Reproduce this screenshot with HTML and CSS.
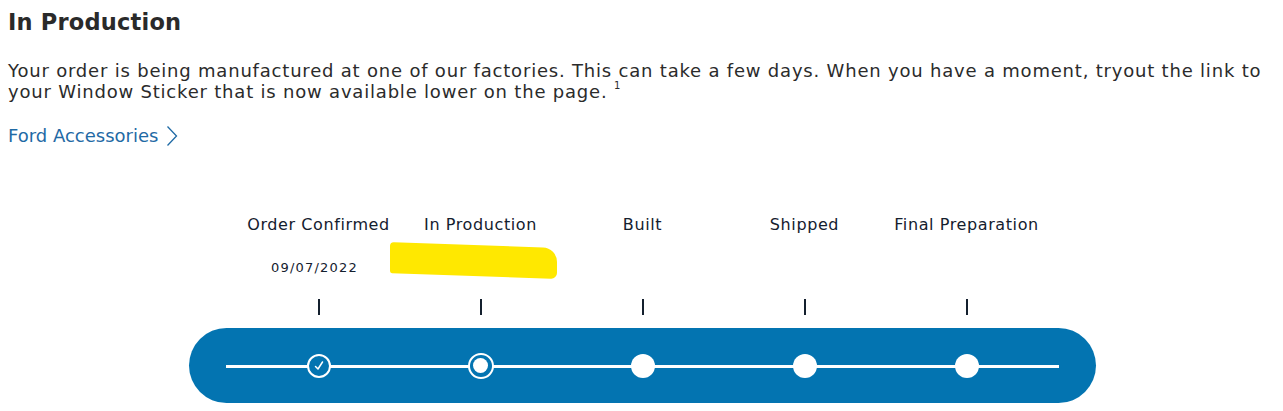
FILE: index.html
```html
<!DOCTYPE html>
<html>
<head>
<meta charset="utf-8">
<link rel="stylesheet" href="styles.css">
</head>
<body>
<div class="page">
  <h2 class="title">In Production</h2>
  <p class="desc">Your order is being manufactured at one of our factories. This can take a few days. When you have a moment, tryout the link to your Window Sticker that is now available lower on the page. <span class="note">1</span></p>
  <a class="link" href="#">Ford Accessories <svg class="chev" width="12" height="22" viewBox="0 0 12 22"><path d="M1.5 1.5 L10.5 11 L1.5 20.5" fill="none" stroke="#1f6aa5" stroke-width="1.3"/></svg></a>

  <div class="tracker">
    <div class="steps">
      <div class="step">
        <div class="label">Order Confirmed</div>
        <div class="date">09/07/2022</div>
        <div class="tick"></div>
      </div>
      <div class="step">
        <div class="label">In Production</div>
        <div class="date"><span class="redact"></span></div>
        <div class="tick"></div>
      </div>
      <div class="step">
        <div class="label">Built</div>
        <div class="date"></div>
        <div class="tick"></div>
      </div>
      <div class="step">
        <div class="label">Shipped</div>
        <div class="date"></div>
        <div class="tick"></div>
      </div>
      <div class="step">
        <div class="label">Final Preparation</div>
        <div class="date"></div>
        <div class="tick"></div>
      </div>
    </div>
    <div class="bar">
      <div class="track">
        <div class="line"></div>
        <div class="dot-cell"><span class="dot done"><svg width="12" height="12" viewBox="0 0 12 12"><path d="M2.5 6.5 L5 9 L9.5 2" fill="none" stroke="#fff" stroke-width="1.5" stroke-linecap="round" stroke-linejoin="round"/></svg></span></div>
        <div class="dot-cell"><span class="dot current"><span class="inner"></span></span></div>
        <div class="dot-cell"><span class="dot todo"></span></div>
        <div class="dot-cell"><span class="dot todo"></span></div>
        <div class="dot-cell"><span class="dot todo"></span></div>
      </div>
    </div>
  </div>
</div>
</body>
</html>
```
FILE: styles.css
```css
* { box-sizing: border-box; }
html, body { margin: 0; padding: 0; background: #fff; }
body { font-family: "DejaVu Sans", "Noto Sans", sans-serif; color: #2b2b2b; }
.page { padding: 7px 8px 0 8px; }
.title {
  margin: 0;
  font-size: 22.5px;
  font-weight: 700;
  line-height: 30px;
  letter-spacing: 0.2px;
  color: #2a2a2a;
}
.desc {
  margin: 23px 0 0 0;
  font-size: 18px;
  line-height: 21px;
  letter-spacing: 0.8px;
  color: #2b2b2b;
}
.note {
  display: inline-block;
  font-size: 10px;
  line-height: 10px;
  vertical-align: top;
  letter-spacing: 0;
}
.link {
  display: inline-flex;
  align-items: center;
  gap: 8px;
  margin-top: 23px;
  font-size: 18px;
  line-height: 22px;
  color: #1f6aa5;
  text-decoration: none;
}
.tracker {
  width: 907px;
  margin: 68px auto 0 auto;
  position: relative;
  left: 1px;
}
.steps {
  display: flex;
  justify-content: center;
}
.step {
  width: 162px;
  display: flex;
  flex-direction: column;
  align-items: center;
  color: #14202e;
}
.label {
  font-size: 16px;
  line-height: 20px;
  letter-spacing: 0.6px;
  white-space: nowrap;
}
.date {
  height: 20px;
  margin-top: 23px;
  font-size: 13px;
  line-height: 20px;
  letter-spacing: 1.2px;
  position: relative;
  width: 100%;
  text-align: center;
  padding-right: 8px;
}
.redact {
  position: absolute;
  left: -10px;
  top: -13px;
  width: 167px;
  height: 31px;
  background: #ffe800;
  border-radius: 4px 14px 6px 2px;
  transform: skewY(2deg);
}
.tick {
  width: 2px;
  height: 16px;
  margin-top: 21px;
  background: #14202e;
}
.bar {
  margin-top: 13px;
  height: 75px;
  border-radius: 38px;
  background: #0374b1;
  display: flex;
  align-items: center;
  padding: 0 37px;
}
.track {
  position: relative;
  flex: 1;
  display: flex;
  justify-content: center;
  height: 26px;
  align-items: center;
}
.line {
  position: absolute;
  left: 0; right: 0;
  top: 50%;
  height: 3px;
  margin-top: -1px;
  background: #fff;
}
.dot-cell {
  width: 162px;
  display: flex;
  justify-content: center;
  position: relative;
}
.dot {
  display: flex;
  align-items: center;
  justify-content: center;
  border-radius: 50%;
}
.dot.done {
  width: 24px; height: 24px;
  border: 2px solid #fff;
  background: #0374b1;
}
.dot.current {
  width: 26px; height: 26px;
  border: 2.5px solid #fff;
  background: #0374b1;
}
.dot.current .inner {
  width: 15px; height: 15px;
  border-radius: 50%;
  background: #fff;
}
.dot.todo {
  width: 24px; height: 24px;
  background: #fff;
}
```
